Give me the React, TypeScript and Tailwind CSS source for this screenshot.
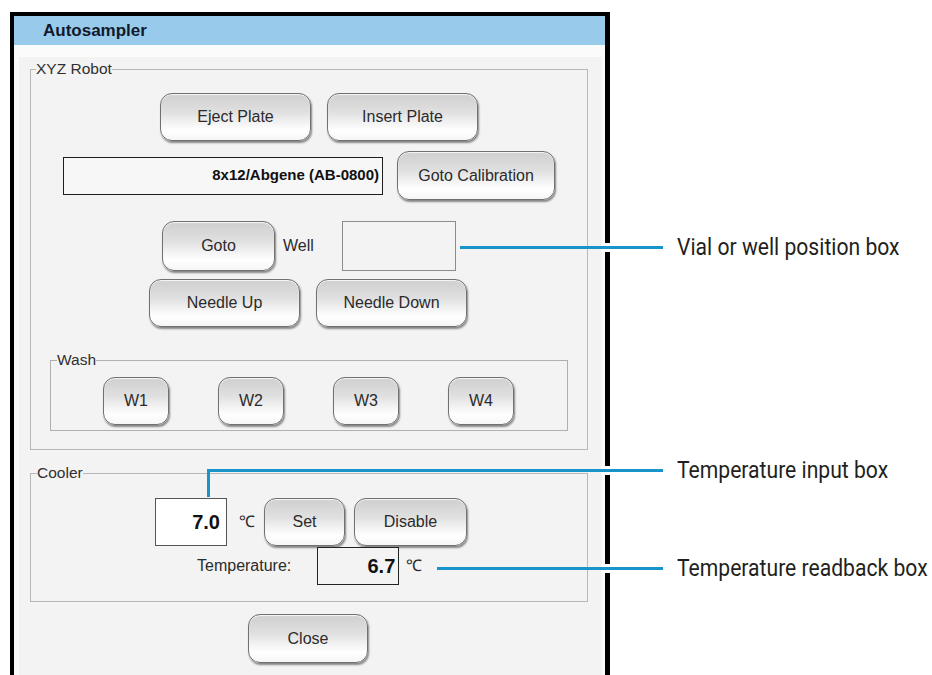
import React from "react";

const btn =
  "flex items-center justify-center rounded-[12px] border border-[#707070] bg-[linear-gradient(to_bottom,#cfcfcf_0%,#e0e0e0_40%,#efefef_58%,#ffffff_80%,#f6f6f6_100%)] shadow-[inset_0_1px_1px_#f7f7f7,1px_2px_2px_rgba(0,0,0,0.45)] text-[16px] text-[#2b2b2b]";

function Btn({ className, children }: { className: string; children: React.ReactNode }) {
  return <div className={`${btn} ${className}`}>{children}</div>;
}

function Callout({ text, top }: { text: string; top: string }) {
  return (
    <div className={`absolute left-[677px] ${top} whitespace-nowrap font-['Roboto',sans-serif] text-[24px] leading-[28px] text-[#231f20] origin-left scale-x-[0.88]`}>
      {text}
    </div>
  );
}

export default function App() {
  return (
    <div className="relative w-[932px] h-[675px] overflow-hidden bg-white font-['Liberation_Sans',Arial,sans-serif]">
      {/* window */}
      <div className="ml-[10px] mt-[12px] w-[600px] h-[700px] border-l-4 border-r-[5px] border-t-4 border-black bg-[#fbfbfb]">
        <div className="h-[29px] bg-[#98cbeb] pl-[29px] flex items-center">
          <span className="text-[17px] font-bold text-[#111a2b]">Autosampler</span>
        </div>

        <div className="mt-[12px] ml-[5px] mr-[3px] h-[640px] bg-[#f3f3f3] pt-[3px]">
          {/* XYZ Robot */}
          <fieldset className="ml-[11px] w-[558px] border border-[#b8b8b8] pb-[18px]">
            <legend className="ml-[5px] text-[15.5px] leading-[18px] text-[#303030]">XYZ Robot</legend>

            <div className="mt-[15px] pl-[129px] flex gap-[16px]">
              <Btn className="w-[151px] h-[48px]">Eject Plate</Btn>
              <Btn className="w-[151px] h-[48px]">Insert Plate</Btn>
            </div>

            <div className="mt-[10px] pl-[32px] flex items-center gap-[14px]">
              <div className="w-[320px] h-[38px] border border-[#1e1e1e] bg-[#f7f7f7] flex items-center justify-end pr-[3px] text-[15px] font-bold text-[#111]">
                8x12/Abgene (AB-0800)
              </div>
              <Btn className="w-[158px] h-[49px]">Goto Calibration</Btn>
            </div>

            <div className="mt-[21px] pl-[131px] flex items-center">
              <Btn className="w-[113px] h-[50px]">Goto</Btn>
              <span className="ml-[8px] text-[16px] text-[#2b2b2b]">Well</span>
              <div className="ml-[28px] w-[114px] h-[50px] border border-[#8c8c8c] bg-[#f3f3f3]" />
            </div>

            <div className="mt-[8px] pl-[118px] flex gap-[16px]">
              <Btn className="w-[151px] h-[48px]">Needle Up</Btn>
              <Btn className="w-[151px] h-[48px]">Needle Down</Btn>
            </div>

            {/* Wash */}
            <fieldset className="mt-[24px] ml-[19px] w-[518px] border border-[#b0b0b0] pb-[5px]">
              <legend className="ml-[6px] text-[15.5px] leading-[18px] text-[#303030]">Wash</legend>
              <div className="mt-[8px] pl-[52px] flex gap-[49px]">
                <Btn className="w-[66px] h-[48px]">W1</Btn>
                <Btn className="w-[66px] h-[48px]">W2</Btn>
                <Btn className="w-[66px] h-[48px]">W3</Btn>
                <Btn className="w-[66px] h-[48px]">W4</Btn>
              </div>
            </fieldset>
          </fieldset>

          {/* Cooler */}
          <fieldset className="mt-[14px] ml-[11px] w-[558px] border border-[#b8b8b8] pb-[16px]">
            <legend className="ml-[6px] text-[15.5px] leading-[18px] text-[#303030]">Cooler</legend>

            <div className="mt-[16px] pl-[124px] flex items-center">
              <div className="w-[72px] h-[48px] border border-[#555] bg-white flex items-center justify-end pr-[6px] text-[20px] font-bold text-[#111]">
                7.0
              </div>
              <span className="ml-[12px] text-[16px] text-[#2b2b2b]">℃</span>
              <Btn className="ml-[9px] w-[81px] h-[48px]">Set</Btn>
              <Btn className="ml-[9px] w-[113px] h-[48px]">Disable</Btn>
            </div>

            <div className="mt-[1px] pl-[166px] flex items-center">
              <span className="text-[16px] text-[#2b2b2b]">Temperature:</span>
              <div className="ml-[26px] w-[82px] h-[38px] border border-[#222] bg-[#f3f3f3] flex items-center justify-end pr-[3px] text-[20px] font-bold text-[#111]">
                6.7
              </div>
              <span className="ml-[7px] text-[16px] text-[#2b2b2b]">℃</span>
            </div>
          </fieldset>

          <div className="mt-[12px] ml-[229px]">
            <Btn className="w-[120px] h-[49px]">Close</Btn>
          </div>
        </div>
      </div>

      {/* callouts */}
      <div className="absolute left-[601px] top-[243px] w-[14px] h-[9px] bg-white" />
      <div className="absolute left-[460px] top-[246px] w-[203px] h-[3px] bg-[#1794c9]" />
      <Callout text="Vial or well position box" top="top-[233px]" />

      <div className="absolute left-[601px] top-[466px] w-[14px] h-[9px] bg-white" />
      <div className="absolute left-[207px] top-[469px] w-[3px] h-[28px] bg-[#1794c9]" />
      <div className="absolute left-[207px] top-[469px] w-[456px] h-[3px] bg-[#1794c9]" />
      <Callout text="Temperature input box" top="top-[456px]" />

      <div className="absolute left-[601px] top-[564px] w-[14px] h-[9px] bg-white" />
      <div className="absolute left-[437px] top-[567px] w-[226px] h-[3px] bg-[#1794c9]" />
      <Callout text="Temperature readback box" top="top-[554px]" />
    </div>
  );
}
